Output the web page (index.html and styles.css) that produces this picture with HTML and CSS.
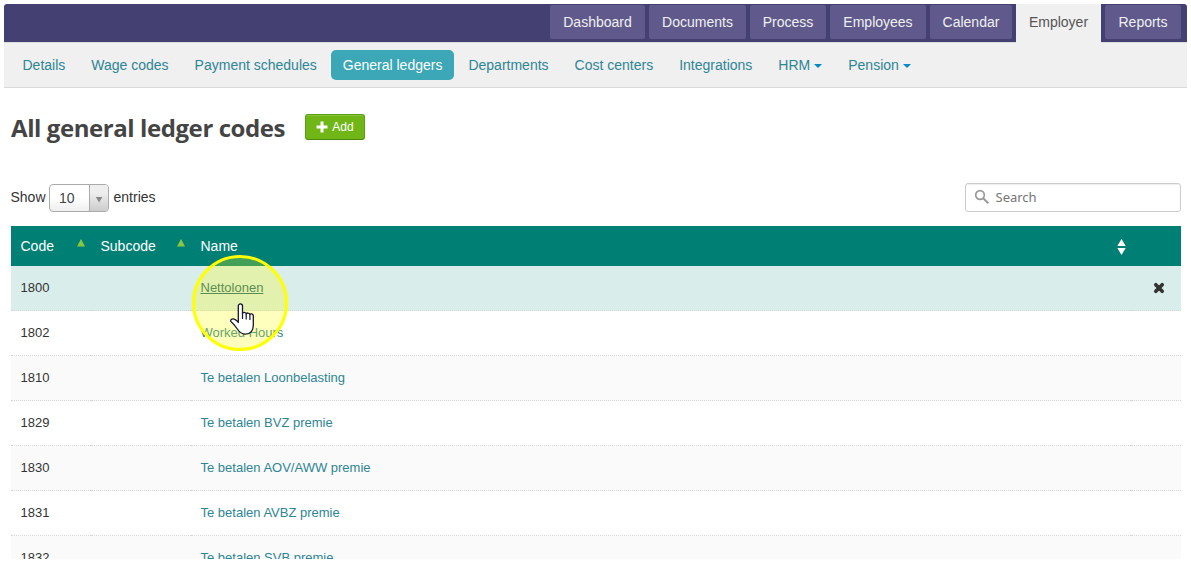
FILE: index.html
```html
<!DOCTYPE html>
<html lang="en">
<head>
<meta charset="utf-8">
<title>All general ledger codes</title>
<link rel="stylesheet" href="styles.css">
</head>
<body>
<div class="page">
  <nav class="tabs">
    <a class="tab t1">Dashboard</a><a class="tab t2">Documents</a><a class="tab t3">Process</a><a class="tab t4">Employees</a><a class="tab t5">Calendar</a><a class="tab active">Employer</a><a class="tab t7">Reports</a>
  </nav>
  <nav class="subnav">
    <a>Details</a><a>Wage codes</a><a>Payment schedules</a><a class="current">General ledgers</a><a>Departments</a><a>Cost centers</a><a>Integrations</a><a>HRM<i class="caret"></i></a><a>Pension<i class="caret"></i></a>
  </nav>
  <main>
    <header class="heading">
      <h1>All general ledger codes</h1>
      <button class="add"><svg width="12" height="12" viewBox="0 0 12 12"><path d="M4.500.5h3v4H11.500v3H7.500v4h-3v-4H.5v-3h4z" fill="#fff"/></svg>Add</button>
    </header>
    <div class="controls">
      <div class="length"><span>Show</span>
        <div class="select"><span>10</span><b><svg width="8" height="7" viewBox="0 0 8 7"><path d="M.8 1h6.600L4.100 6.500z" fill="#888"/></svg></b></div>
        <span class="unit">entries</span></div>
      <div class="search"><svg width="16" height="16" viewBox="0 0 16 16" fill="none" stroke="#999"><circle cx="6" cy="6" r="4.300" stroke-width="1.700"/><path d="M9.200 9.200L14.300 14.300" stroke-width="2"/></svg><span>Search</span></div>
    </div>
    <div class="table">
      <div class="row head"><div>Code<svg class="asc" width="8" height="8" viewBox="0 0 8 8"><path d="M4 0l4 7.500H0z" fill="#8cc63f"/></svg></div><div>Subcode<svg class="asc" width="8" height="8" viewBox="0 0 8 8"><path d="M4 0l4 7.500H0z" fill="#8cc63f"/></svg></div><div>Name<svg class="both" width="9" height="16" viewBox="0 0 9 16"><path d="M4.500 0L8.700 7H.3zM.3 9h8.400L4.500 16z" fill="#fff"/></svg></div><div></div></div>
      <div class="row hover"><div>1800</div><div></div><div><a>Nettolonen</a></div><div><svg width="12" height="12" viewBox="0 0 12 12"><path d="M2.800 2.800l6.400 6.400M9.200 2.800L2.800 9.200" stroke="#333" stroke-width="3.700" stroke-linecap="round"/></svg></div></div>
      <div class="row"><div>1802</div><div></div><div><a>Worked Hours</a></div><div></div></div>
      <div class="row odd"><div>1810</div><div></div><div><a>Te betalen Loonbelasting</a></div><div></div></div>
      <div class="row"><div>1829</div><div></div><div><a>Te betalen BVZ premie</a></div><div></div></div>
      <div class="row odd"><div>1830</div><div></div><div><a>Te betalen AOV/AWW premie</a></div><div></div></div>
      <div class="row"><div>1831</div><div></div><div><a>Te betalen AVBZ premie</a></div><div></div></div>
      <div class="row odd"><div>1832</div><div></div><div><a>Te betalen SVB premie</a></div><div></div></div>
    </div>
  </main>
</div>
<div class="spot"></div>
<svg class="pointer" width="28" height="34" viewBox="0 0 28 34"><path d="M9.300 20.500V4c0-2.900 4.200-2.900 4.200 0v7.500c.3-1.700 3.500-1.500 3.700.5.300-1.500 3.500-1.300 3.700.7.300-1.300 3.300-1.100 3.400 1v9.500c0 5-2.700 9-7.800 9-4.200 0-6.200-2.200-8.200-5.200-1.900-2.800-3.600-5-5.900-6.900-2-1.700.3-4 2.800-3 1.900.7 3.300 2 4.100 3.400z" fill="#fff" stroke="#15152b" stroke-width="1.300" stroke-linejoin="round"/><path d="M13.500 11v6M17.200 12v5.500M20.900 13v5" stroke="#15152b" stroke-width="1.200"/></svg>
</body>
</html>
```
FILE: styles.css
```css
* { box-sizing: border-box; }
body { margin: 0; padding: 4px; height: 563px; overflow: hidden; background: #fff; font: 14px/20px "Liberation Sans", Arial, sans-serif; color: #333; }
.page { height: 555px; overflow: hidden; border-radius: 3px 3px 0 0; background: #fff; }
.tabs { height: 38px; padding: 1px 6px 0 0; display: flex; justify-content: flex-end; gap: 4px; background: #454072; }
.tab { height: 34px; line-height: 34px; text-align: center; border-radius: 2px; background: #5f5a8b; color: #f0f0f0; }
.t1 { width: 95px; }
.t2 { width: 97px; }
.t3 { width: 76px; }
.t4 { width: 96px; }
.t5 { width: 82px; }
.t7 { width: 76px; }
.tab.active { width: 85px; height: 39px; margin-top: -1px; padding-top: 1px; border-radius: 0; background: #f0f0f0; color: #555; z-index: 1; }
.subnav { height: 46px; padding: 7px 0 0 6.500px; display: flex; gap: 2px; background: #f0f0f0; border-top: 1px solid #ddd; border-bottom: 1px solid #d9d9d9; }
.subnav a { height: 30px; padding: 0 12px; line-height: 30px; color: #2e8594; white-space: nowrap; }
.subnav .current { background: #3ba7b7; color: #fff; border-radius: 5px; }
.caret { display: inline-block; margin-left: 4px; vertical-align: 2px; border: 4px solid transparent; border-top-color: #08c; border-bottom: 0; }
main { padding: 0 6px 0 7px; }
.heading { height: 95px; padding-top: 25px; display: flex; align-items: flex-start; }
h1 { width: 294px; margin: 0; font: bold 24px/30px "Trebuchet MS", "Open Sans", sans-serif; letter-spacing: -.42px; color: #444; white-space: nowrap; }
.add { width: 60px; height: 26px; margin-top: 1px; padding: 0 0 1px; display: flex; align-items: center; justify-content: center; gap: 4px; border: 1px solid #5ba010; border-bottom-color: #4c880b; border-radius: 3px; background: #70b617; box-shadow: inset 0 1px #88c53d; color: #fff; font: 12px "Liberation Sans", Arial, sans-serif; }
.controls { height: 43px; display: flex; justify-content: space-between; }
.length { height: 30px; margin-left: -.5px; display: flex; align-items: center; gap: 3.500px; }
.length > span { height: 22px; line-height: 20px; }
.unit { margin-left: 1px; }
.select { width: 60px; height: 28px; display: flex; justify-content: space-between; border: 1px solid #aaa; border-radius: 4px; background: linear-gradient(#fff 50%, #eee); line-height: 27px; overflow: hidden; color: #444; }
.select span { padding-left: 9px; }
.select b { width: 19px; display: flex; justify-content: center; padding-top: 11px; border-left: 1px solid #aaa; background: linear-gradient(#eee 30%, #ccc); }
.search { width: 216px; height: 29px; display: flex; align-items: center; gap: 6px; padding: 0 0 1px 7.500px; border: 1px solid #ccc; border-radius: 3px; box-shadow: inset 0 1px 1px #eee; font: 13px "Noto Sans", sans-serif; color: #757575; }
.row { height: 45px; display: grid; grid-template-columns: 80px 100px 940px 50px; font-size: 13px; background: #fff; }
.row > div { padding-left: 9.500px; display: flex; align-items: center; border-bottom: 1px dotted #d5d5d5; }
.row > div:last-child { padding-left: 22px; }
.row.odd { background: #fafafa; }
.row.hover { background: #d9edeb; }
.row a { color: #2e8594; }
.row.hover a { text-decoration: underline; color: #1f6571; }
.row.head { height: 40px; background: #008075; color: #fff; font-size: 14px; }
.row.head > div { border: 0; justify-content: space-between; }
.asc { margin: 0 6px 6px 0; }
.both { margin: 2px 5px 0 0; }
.spot { position: absolute; left: 192px; top: 255px; width: 96px; height: 96px; border: 3px solid #ff0; border-radius: 50%; background: rgba(255, 255, 0, .26); }
.pointer { position: absolute; left: 229px; top: 302px; }
```
